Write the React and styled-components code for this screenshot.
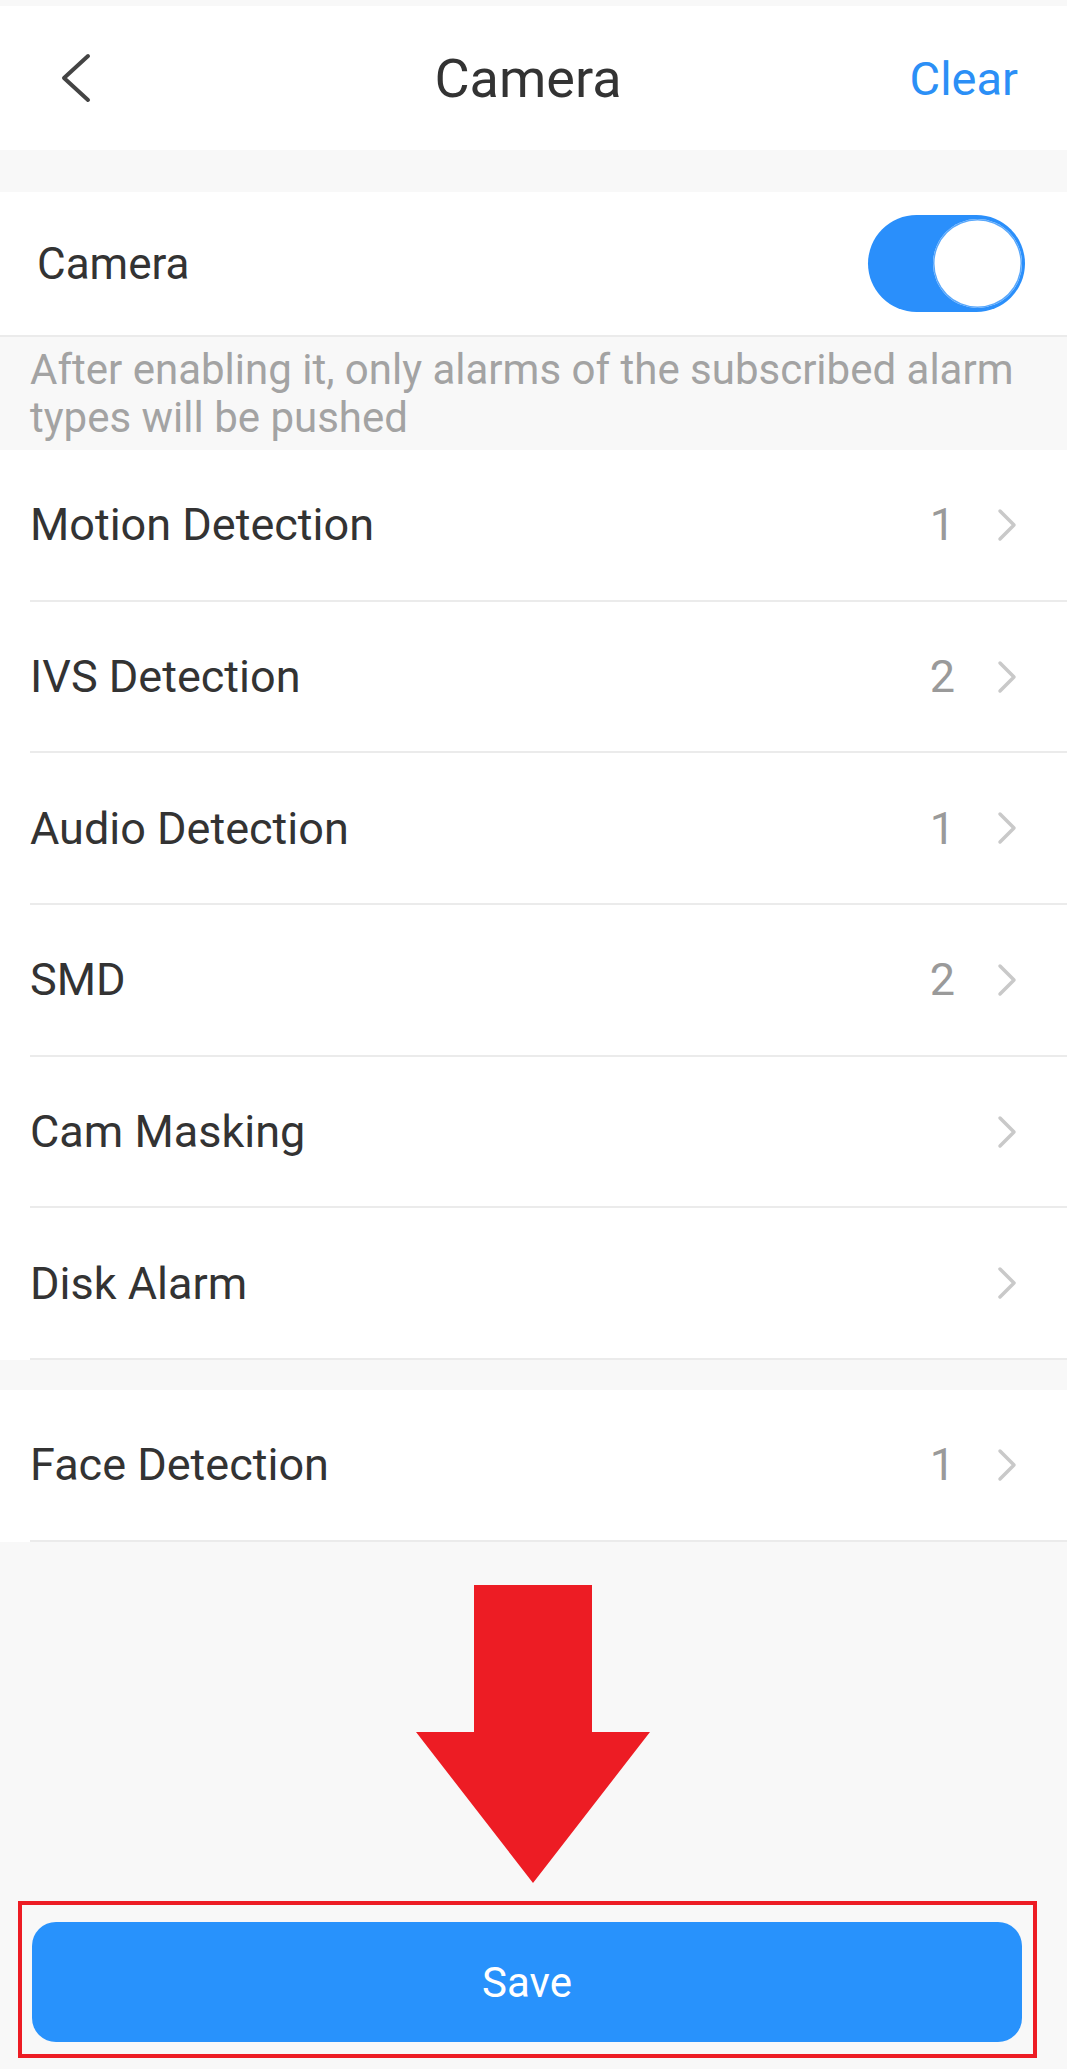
import React from "react";
import styled, { createGlobalStyle } from "styled-components";

const Global = createGlobalStyle`
  html, body { margin: 0; padding: 0; background: #f8f8f8; }
  body { font-family: Roboto, "Noto Sans", "Liberation Sans", sans-serif; -webkit-font-smoothing: antialiased; }
  * { box-sizing: border-box; }
`;

const Page = styled.div`
  width: 1067px;
  min-height: 2069px;
  background: #f8f8f8;
  padding-top: 6px;
  display: flex;
  flex-direction: column;
`;

const Header = styled.header`
  height: 144px;
  background: #fff;
  display: grid;
  grid-template-columns: 1fr auto 1fr;
  align-items: center;
  padding: 0 49px 0 38px;
`;

const BackButton = styled.button`
  justify-self: start;
  margin-left: 22px;
  border: 0;
  background: none;
  padding: 0;
  display: flex;
  align-items: center;
  cursor: pointer;
`;

const Title = styled.h1`
  margin: 0;
  font-size: 54px;
  font-weight: 400;
  color: #333;
`;

const ClearLink = styled.span`
  justify-self: end;
  font-size: 47px;
  color: #2b8ff6;
`;

const Group = styled.section`
  background: #fff;
  margin-top: ${(p) => p.$gap || 0}px;
`;

const SwitchRow = styled.div`
  height: 145px;
  display: flex;
  align-items: center;
  justify-content: space-between;
  padding: 0 42px 0 37px;
  border-bottom: 2px solid #ebebeb;
`;

const SwitchLabel = styled.span`
  font-size: 44px;
  color: #333;
`;

const Track = styled.span`
  width: 157px;
  height: 97px;
  border-radius: 49px;
  background: #2a8ffb;
  display: flex;
  align-items: center;
  justify-content: ${(p) => (p.$on ? "flex-end" : "flex-start")};
  padding: 0 3px;
`;

const Knob = styled.span`
  width: 89px;
  height: 89px;
  border-radius: 50%;
  background: #fff;
  box-shadow: 0 0 0 1.5px #5aa8fb inset;
`;

const Hint = styled.p`
  margin: 0;
  padding: 9px 30px 8px 30px;
  font-size: 42px;
  line-height: 48px;
  color: #a3a3a3;
`;

const List = styled.div`
  background: #fff;
  margin-top: ${(p) => p.$gap || 0}px;
`;

const Row = styled.div`
  height: 151.7px;
  margin-left: 30px;
  padding-right: 50px;
  display: flex;
  align-items: center;
  border-bottom: 2px solid #ebebeb;
`;

const RowLabel = styled.span`
  flex: 1;
  font-size: 45px;
  color: #333;
`;

const Count = styled.span`
  font-size: 45px;
  color: #9a9a9a;
  margin-right: 42px;
`;

const Chevron = styled.svg`
  width: 20px;
  height: 34px;
  display: block;
`;

const Spacer = styled.div`
  flex: 1;
  display: flex;
  flex-direction: column;
  align-items: center;
  justify-content: flex-end;
  padding-bottom: 11px;
`;

const Arrow = styled.svg`
  display: block;
  width: 234px;
  height: 298px;
  margin-right: 2px;
  margin-bottom: 18px;
`;

const Highlight = styled.div`
  width: 1019px;
  margin-left: 18px;
  align-self: flex-start;
  border: 4px solid #ed1c24;
  padding: 17px 11px 12px 10px;
`;

const SaveButton = styled.button`
  width: 100%;
  height: 120px;
  border: 0;
  border-radius: 24px;
  background: #2892fc;
  color: #fff;
  font-family: inherit;
  font-size: 42px;
  cursor: pointer;
`;

const rows = [
  { label: "Motion Detection", count: 1 },
  { label: "IVS Detection", count: 2 },
  { label: "Audio Detection", count: 1 },
  { label: "SMD", count: 2 },
  { label: "Cam Masking" },
  { label: "Disk Alarm" },
];

function ChevronRight() {
  return (
    <Chevron viewBox="0 0 20 34">
      <path d="M3 3 L17 17 L3 31" fill="none" stroke="#c9c9c9" strokeWidth="3.5" strokeLinecap="round" strokeLinejoin="round" />
    </Chevron>
  );
}

function ListRow({ label, count }) {
  return (
    <Row>
      <RowLabel>{label}</RowLabel>
      {count != null && <Count>{count}</Count>}
      <ChevronRight />
    </Row>
  );
}

export default function App() {
  return (
    <>
      <Global />
      <Page>
        <Header>
          <BackButton aria-label="Back">
            <svg width="32" height="52" viewBox="0 0 32 52">
              <path d="M28 4 L4 26 L28 48" fill="none" stroke="#444" strokeWidth="4" strokeLinecap="round" strokeLinejoin="round" />
            </svg>
          </BackButton>
          <Title>Camera</Title>
          <ClearLink>Clear</ClearLink>
        </Header>

        <Group $gap={42}>
          <SwitchRow>
            <SwitchLabel>Camera</SwitchLabel>
            <Track $on>
              <Knob />
            </Track>
          </SwitchRow>
        </Group>
        <Hint>After enabling it, only alarms of the subscribed alarm types will be pushed</Hint>

        <List>
          {rows.map((r) => (
            <ListRow key={r.label} {...r} />
          ))}
        </List>

        <List $gap={30}>
          <ListRow label="Face Detection" count={1} />
        </List>

        <Spacer>
          <Arrow viewBox="0 0 234 298">
            <path d="M58 0 H176 V147 H234 L117 298 L0 147 H58 Z" fill="#ed1c24" />
          </Arrow>
          <Highlight>
            <SaveButton>Save</SaveButton>
          </Highlight>
        </Spacer>
      </Page>
    </>
  );
}
